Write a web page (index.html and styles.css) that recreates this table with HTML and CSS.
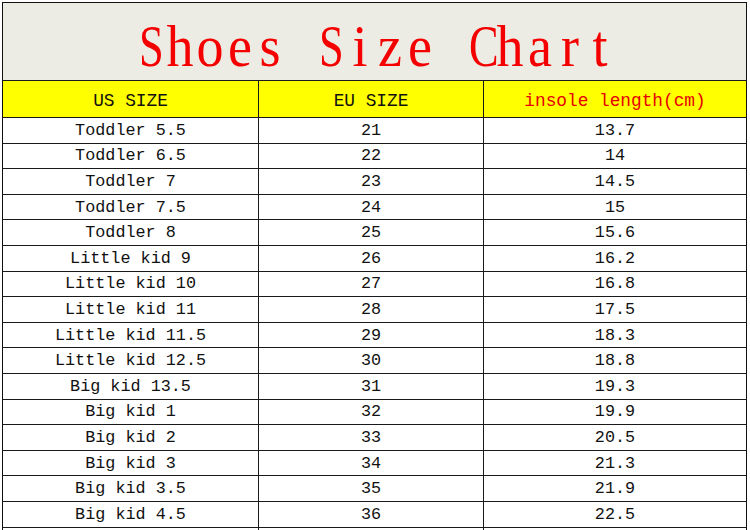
FILE: index.html
```html
<!DOCTYPE html>
<html>
<head>
<meta charset="utf-8">
<link rel="stylesheet" href="styles.css">
</head>
<body>
<div class="chart">
  <div class="title"><span class="ch w">S</span><span class="ch">h</span><span class="ch">o</span><span class="ch">e</span><span class="ch">s</span><span class="ch"> </span><span class="ch w">S</span><span class="ch">i</span><span class="ch">z</span><span class="ch">e</span><span class="ch"> </span><span class="ch w">C</span><span class="ch">h</span><span class="ch">a</span><span class="ch">r</span><span class="ch">t</span></div>
  <div class="head">US SIZE</div><div class="head">EU SIZE</div><div class="head red">insole length(cm)</div>
  <div class="cell">Toddler 5.5</div><div class="cell">21</div><div class="cell">13.7</div>
  <div class="cell">Toddler 6.5</div><div class="cell">22</div><div class="cell">14</div>
  <div class="cell">Toddler 7</div><div class="cell">23</div><div class="cell">14.5</div>
  <div class="cell">Toddler 7.5</div><div class="cell">24</div><div class="cell">15</div>
  <div class="cell">Toddler 8</div><div class="cell">25</div><div class="cell">15.6</div>
  <div class="cell">Little kid 9</div><div class="cell">26</div><div class="cell">16.2</div>
  <div class="cell">Little kid 10</div><div class="cell">27</div><div class="cell">16.8</div>
  <div class="cell">Little kid 11</div><div class="cell">28</div><div class="cell">17.5</div>
  <div class="cell">Little kid 11.5</div><div class="cell">29</div><div class="cell">18.3</div>
  <div class="cell">Little kid 12.5</div><div class="cell">30</div><div class="cell">18.8</div>
  <div class="cell">Big kid 13.5</div><div class="cell">31</div><div class="cell">19.3</div>
  <div class="cell">Big kid 1</div><div class="cell">32</div><div class="cell">19.9</div>
  <div class="cell">Big kid 2</div><div class="cell">33</div><div class="cell">20.5</div>
  <div class="cell">Big kid 3</div><div class="cell">34</div><div class="cell">21.3</div>
  <div class="cell">Big kid 3.5</div><div class="cell">35</div><div class="cell">21.9</div>
  <div class="cell">Big kid 4.5</div><div class="cell">36</div><div class="cell">22.5</div>
  <div class="cell"></div><div class="cell"></div><div class="cell"></div>
</div>
</body>
</html>
```
FILE: styles.css
```css
html, body {
  margin: 0;
  padding: 0;
  background: #ffffff;
  overflow: hidden;
}
.chart {
  margin: 2px 0 0 2px;
  width: 743px;
  border: 1px solid #111;
  border-bottom: none;
  background: #1a1a1a;
  display: grid;
  grid-template-columns: 255px 224px 262px;
  grid-template-rows: 77px 36px repeat(17, 24.6px);
  gap: 1px;
  font-family: "Liberation Mono", "DejaVu Sans Mono", monospace;
  color: #111;
}
.title {
  grid-column: 1 / -1;
  background: #edece4;
  display: flex;
  justify-content: center;
  align-items: center;
  padding-top: 8px;
  box-sizing: border-box;
  font-family: "Liberation Serif", serif;
  font-size: 60px;
  line-height: 1;
  color: #f50000;
}
.ch {
  display: inline-block;
  width: 30px;
  text-align: center;
  transform: scaleX(0.9);
  white-space: pre;
}
.ch.w {
  transform: scaleX(0.74);
}
.head {
  background: #ffff00;
  display: flex;
  justify-content: center;
  align-items: center;
  padding-top: 3px;
  box-sizing: border-box;
  font-size: 17.8px;
}
.red {
  color: #e60000;
}
.cell {
  background: #fff;
  display: flex;
  justify-content: center;
  align-items: center;
  padding-top: 2px;
  box-sizing: border-box;
  font-size: 16.8px;
  line-height: 1;
  white-space: pre;
}
```
